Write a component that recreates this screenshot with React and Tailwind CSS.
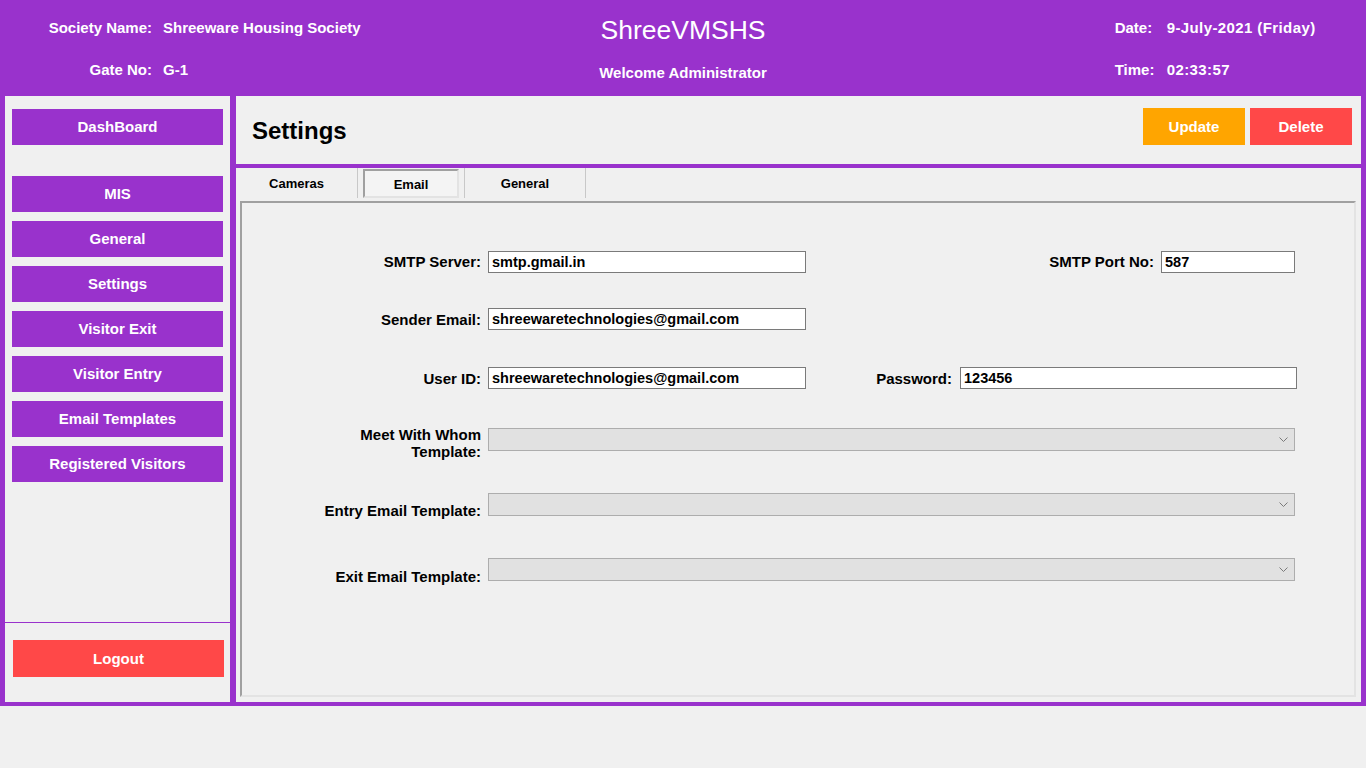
import { useState } from 'react';

const font = { fontFamily: '"Liberation Sans", Arial, sans-serif' };

const menu = ['MIS', 'General', 'Settings', 'Visitor Exit', 'Visitor Entry', 'Email Templates', 'Registered Visitors'];

function SideButton({ children, className = '' }) {
    return (
        <button className={`h-[36px] w-full bg-[#9932cc] pt-[1px] text-white text-[15px] font-bold ${className}`}>
            {children}
        </button>
    );
}

function TextBox({ value, w }) {
    return (
        <input
            readOnly
            value={value}
            className={`h-[22px] ${w} border border-[#7a7a7a] bg-white px-[3px] text-[14.5px] font-bold text-black outline-none`}
        />
    );
}

function Combo() {
    return (
        <div className="relative h-[23px] w-[807px] border border-[#adadad] bg-[#e1e1e1]">
            <svg className="absolute right-[6px] top-[8px]" width="9" height="6" viewBox="0 0 9 6">
                <polyline points="0.5,0.5 4.5,4.5 8.5,0.5" fill="none" stroke="#7a7a7a" strokeWidth="1" />
            </svg>
        </div>
    );
}

export default function App() {
    const [tab, setTab] = useState('Email');

    return (
        <div style={font} className="min-h-screen bg-[#f0f0f0]">
            <div className="bg-[#9932cc] pb-[4px]">
                {/* Header */}
                <div className="grid h-[96px] grid-cols-3 pt-[7px] text-[15px] font-bold text-white">
                    <div className="grid grid-cols-[152px_1fr] auto-rows-[42px] items-center gap-x-[11px]">
                        <span className="text-right">Society Name:</span>
                        <span>Shreeware Housing Society</span>
                        <span className="text-right">Gate No:</span>
                        <span>G-1</span>
                    </div>
                    <div className="grid auto-rows-[42px] items-center pt-[3px] text-center">
                        <span className="text-[26.5px] font-normal">ShreeVMSHS</span>
                        <span>Welcome Administrator</span>
                    </div>
                    <div className="grid grid-cols-[52px_1fr] auto-rows-[42px] items-center pl-[204px]">
                        <span>Date:</span>
                        <span className="tracking-[0.4px]">9-July-2021 (Friday)</span>
                        <span>Time:</span>
                        <span className="tracking-[0.4px]">02:33:57</span>
                    </div>
                </div>

                <div className="flex h-[606px] gap-[6px] px-[5px]">
                    {/* Sidebar */}
                    <aside className="flex w-[225px] flex-col bg-[#f0f0f0]">
                        <div className="px-[7px] pt-[13px]">
                            <SideButton>DashBoard</SideButton>
                            <div className="mt-[31px] flex flex-col gap-[9px]">
                                {menu.map((m) => (
                                    <SideButton key={m}>{m}</SideButton>
                                ))}
                            </div>
                        </div>
                        <div className="flex-1" />
                        <div className="h-[80px] border-t border-[#9932cc] pl-[8px] pr-[6px] pt-[17px]">
                            <button className="h-[37px] w-full bg-[#ff4848] pt-[1px] text-[15px] font-bold text-white">Logout</button>
                        </div>
                    </aside>

                    {/* Main */}
                    <main className="flex flex-1 flex-col gap-[4px]">
                        <div className="flex h-[68px] items-center justify-between bg-[#f0f0f0] pl-[16px] pr-[9px]">
                            <h1 className="mt-[2px] text-[24px] font-bold text-black">Settings</h1>
                            <div className="mb-[7px] flex gap-[5px]">
                                <button className="h-[37px] w-[102px] bg-[#ffa500] pt-[1px] text-[15px] font-bold text-white">Update</button>
                                <button className="h-[37px] w-[102px] bg-[#ff4848] pt-[1px] text-[15px] font-bold text-white">Delete</button>
                            </div>
                        </div>

                        <div className="flex flex-1 flex-col bg-[#f0f0f0] pb-[5px] pl-[4px] pr-[5px]">
                            {/* Tabs */}
                            <div className="-ml-[4px] flex h-[33px] items-start text-[13px] font-bold text-black">
                                <button
                                    onClick={() => setTab('Cameras')}
                                    className="flex h-[30px] w-[122px] items-center justify-center border-r border-[#c8c8c8] pt-[1px]"
                                >
                                    Cameras
                                </button>
                                <button
                                    onClick={() => setTab('Email')}
                                    className="ml-[5px] mt-[1px] flex h-[29px] w-[96px] items-center justify-center border-2 border-t-[#a0a0a0] border-l-[#a0a0a0] border-r-[#e3e3e3] border-b-[#e3e3e3] bg-[#f4f4f4] pt-[2px]"
                                >
                                    Email
                                </button>
                                <button
                                    onClick={() => setTab('General')}
                                    className="ml-[5px] flex h-[30px] w-[122px] items-center justify-center border-x border-[#c8c8c8] pt-[1px]"
                                >
                                    General
                                </button>
                            </div>

                            {/* Email settings */}
                            <div className="flex-1 border-2 border-t-[#a0a0a0] border-l-[#a0a0a0] border-r-[#e3e3e3] border-b-[#e3e3e3] text-[15px] font-bold text-black">
                                <div className="flex flex-col pt-[48px]">
                                    <div className="flex h-[22px] items-center">
                                        <label className="w-[246px] pr-[7px] pt-[1px] text-right">SMTP Server:</label>
                                        <TextBox value="smtp.gmail.in" w="w-[318px]" />
                                        <label className="w-[355px] pr-[7px] pt-[1px] text-right">SMTP Port No:</label>
                                        <TextBox value="587" w="w-[134px]" />
                                    </div>

                                    <div className="mt-[35px] flex h-[22px] items-center">
                                        <label className="w-[246px] pr-[7px] pt-[3px] text-right">Sender Email:</label>
                                        <TextBox value="shreewaretechnologies@gmail.com" w="w-[318px]" />
                                    </div>

                                    <div className="mt-[37px] flex h-[22px] items-center">
                                        <label className="w-[246px] pr-[7px] pt-[2px] text-right">User ID:</label>
                                        <TextBox value="shreewaretechnologies@gmail.com" w="w-[318px]" />
                                        <label className="w-[154px] pr-[8px] pt-[2px] text-right">Password:</label>
                                        <TextBox value="123456" w="w-[337px]" />
                                    </div>

                                    <div className="mt-[39px] flex h-[23px] items-start">
                                        <label className="-mt-[2px] w-[246px] pr-[7px] text-right leading-[17px]">
                                            Meet With Whom
                                            <br />
                                            Template:
                                        </label>
                                        <Combo />
                                    </div>

                                    <div className="mt-[42px] flex h-[23px] items-start">
                                        <label className="w-[246px] pr-[7px] pt-[7px] text-right">Entry Email Template:</label>
                                        <Combo />
                                    </div>

                                    <div className="mt-[42px] flex h-[23px] items-start">
                                        <label className="w-[246px] pr-[7px] pt-[8px] text-right">Exit Email Template:</label>
                                        <Combo />
                                    </div>
                                </div>
                            </div>
                        </div>
                    </main>
                </div>
            </div>
        </div>
    );
}
